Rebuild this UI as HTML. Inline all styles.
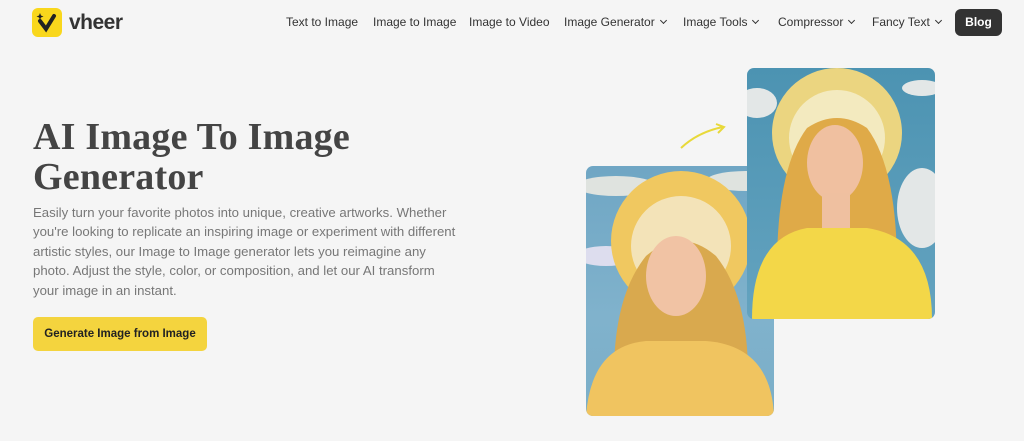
<!DOCTYPE html>
<html><head><meta charset="utf-8"><style>
*{margin:0;padding:0;box-sizing:border-box}
body{width:1024px;height:441px;background:#f5f5f5;font-family:"Liberation Sans",sans-serif;position:relative;overflow:hidden;color:#333}
.logo{position:absolute;left:32px;top:8px;width:30px;height:29px;background:#f9d71c;border-radius:6px}
.brand{position:absolute;left:69px;top:11px;font-size:21px;font-weight:bold;color:#333;letter-spacing:-0.5px}
.nav{position:absolute;top:15px;font-size:12px;color:#333}
.chev{display:inline-block;width:5px;height:5px;border-right:1.5px solid #333;border-bottom:1.5px solid #333;transform:rotate(45deg);margin-left:6px;position:relative;top:-3px}
.blog{position:absolute;left:955px;top:9px;width:47px;height:27px;background:#333;color:#fff;border-radius:6px;font-size:12px;font-weight:bold;text-align:center;line-height:27px}
h1{position:absolute;left:33px;top:117px;font-family:"Liberation Serif",serif;font-size:38px;line-height:40px;font-weight:bold;color:#444;letter-spacing:0.2px}
p{position:absolute;left:33px;top:203px;width:458px;font-size:13.2px;line-height:19.4px;color:#777}
.btn{position:absolute;left:33px;top:317px;width:174px;height:34px;background:#f4d43e;border-radius:5px;font-size:11.5px;font-weight:bold;text-align:center;line-height:34px;color:#222}
.img{position:absolute;border-radius:7px;overflow:hidden}
</style></head><body>
<div class="logo"><svg width="30" height="29"><path d="M8 13 L14 21 L22 8" stroke="#222" stroke-width="4" fill="none" stroke-linecap="round"/><path d="M8 5 l1 2.5 2.5 1-2.5 1-1 2.5-1-2.5-2.5-1 2.5-1z" fill="#222"/></svg></div>
<div class="brand">vheer</div>
<div class="nav" style="left:286px">Text to Image</div>
<div class="nav" style="left:373px">Image to Image</div>
<div class="nav" style="left:469px">Image to Video</div>
<div class="nav" style="left:564px">Image Generator<span class="chev"></span></div>
<div class="nav" style="left:683px">Image Tools<span class="chev"></span></div>
<div class="nav" style="left:778px">Compressor<span class="chev"></span></div>
<div class="nav" style="left:872px">Fancy Text<span class="chev"></span></div>
<div class="blog">Blog</div>
<h1>AI Image To Image<br>Generator</h1>
<p>Easily turn your favorite photos into unique, creative artworks. Whether<br>you're looking to replicate an inspiring image or experiment with different<br>artistic styles, our Image to Image generator lets you reimagine any<br>photo. Adjust the style, color, or composition, and let our AI transform<br>your image in an instant.</p>
<div class="btn">Generate Image from Image</div>
<svg style="position:absolute;left:678px;top:122px" width="50" height="30"><path d="M3 26 Q20 10 45 5" stroke="#e8d93a" stroke-width="2" fill="none"/><path d="M38 2 L46 5 L40 11" stroke="#e8d93a" stroke-width="2" fill="none"/></svg>
<div class="img" style="left:586px;top:166px;width:188px;height:250px;background:linear-gradient(#6fa6c4,#80b2cc 60%,#7aaec8)">
<svg width="188" height="250"><ellipse cx="30" cy="20" rx="40" ry="10" fill="#dfe3df"/><ellipse cx="160" cy="15" rx="40" ry="10" fill="#dfe3df"/><ellipse cx="20" cy="90" rx="30" ry="10" fill="#dde"/>
<circle cx="95" cy="75" r="70" fill="#f0c860"/><circle cx="95" cy="80" r="50" fill="#f3e3b8"/>
<path d="M30 250 Q20 140 60 90 Q95 60 130 90 Q170 140 160 250Z" fill="#d9a94e"/>
<ellipse cx="90" cy="110" rx="30" ry="40" fill="#f1c3a4"/>
<path d="M0 250 Q5 180 60 175 L120 175 Q185 180 188 250Z" fill="#f0c460"/></svg></div>
<div class="img" style="left:747px;top:68px;width:188px;height:251px;background:linear-gradient(#4c93b2,#64a3bf)">
<svg width="188" height="251"><ellipse cx="10" cy="35" rx="20" ry="15" fill="#e3e7e7"/><ellipse cx="175" cy="140" rx="25" ry="40" fill="#e3e7e7"/><ellipse cx="175" cy="20" rx="20" ry="8" fill="#e3e7e7"/>
<circle cx="90" cy="65" r="65" fill="#ebd580"/><circle cx="90" cy="70" r="48" fill="#f3eabf"/>
<path d="M30 200 Q30 100 60 60 Q90 40 120 60 Q150 100 150 200Z" fill="#dfaa48"/>
<ellipse cx="88" cy="95" rx="28" ry="38" fill="#f0c0a0"/><rect x="75" y="125" width="28" height="40" fill="#efc0a0"/>
<path d="M5 251 Q5 170 60 160 L120 160 Q185 170 185 251Z" fill="#f3d748"/></svg></div>
</body></html>
